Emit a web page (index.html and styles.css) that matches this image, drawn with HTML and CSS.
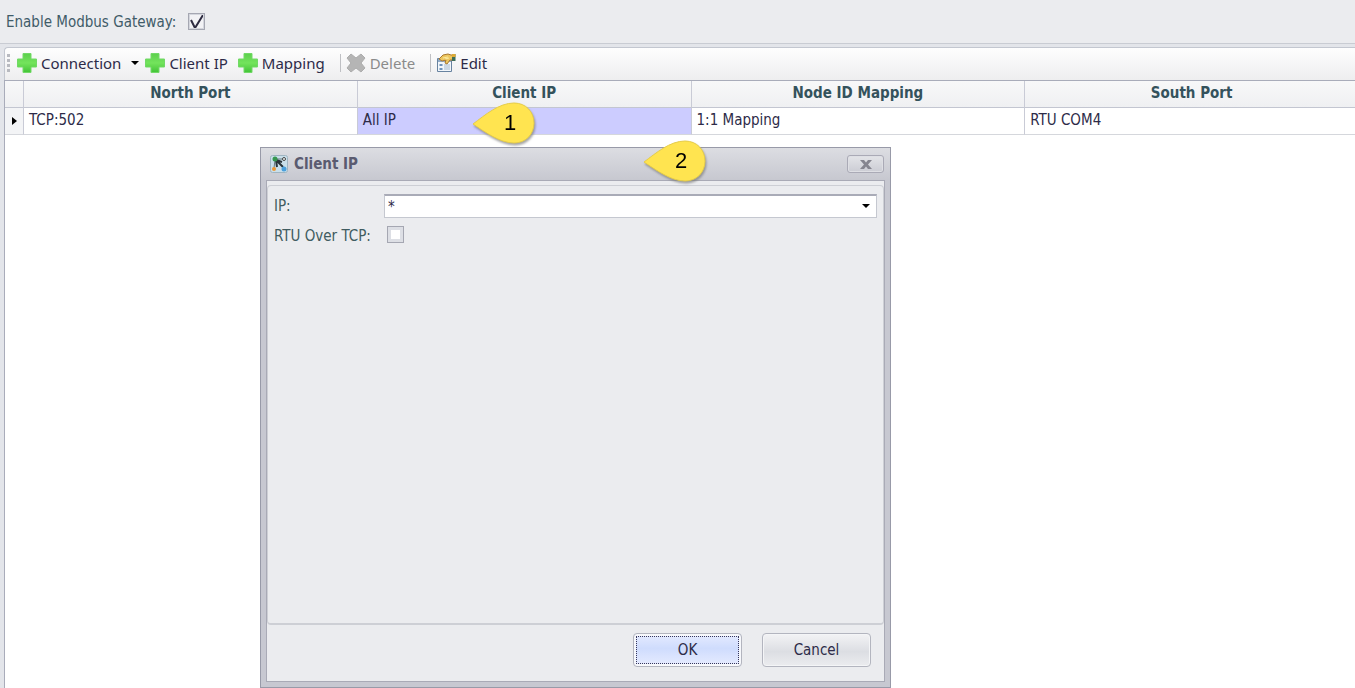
FILE: index.html
```html
<!DOCTYPE html>
<html lang="en">
<head>
<meta charset="utf-8">
<title>Modbus Gateway</title>
<link rel="stylesheet" href="styles.css">
</head>
<body>
<svg class="defs" aria-hidden="true">
  <defs>
    <linearGradient id="green" x1="0" y1="0" x2="0" y2="1"><stop offset="0" stop-color="#5ccf4d"/><stop offset=".5" stop-color="#74e45c"/><stop offset="1" stop-color="#41c336"/></linearGradient>
    <symbol id="plus" viewBox="0 0 20 20"><path d="M6 .5h8V6h5.500v8H14v5.500H6V14H.5V6H6z" fill="url(#green)" stroke="#72d967"/></symbol>
    <symbol id="callout" viewBox="0 0 64 42"><path d="M1 22C13 13 27 1 42 1C54 1 62 10 62 21S54 41 42 41C28 41 13 30 1 22Z" fill="#ffe450" stroke="#e5cc49"/></symbol>
  </defs>
</svg>
<main class="page">
  <header class="gateway">
    <label for="gateway">Enable Modbus Gateway:</label>
    <input class="check" id="gateway" type="checkbox" checked>
  </header>
  <section class="panel">
    <div class="toolbar" role="toolbar" aria-label="Gateway actions">
      <span class="grip"></span>
      <button class="tool tool-connection" type="button"><svg class="icon"><use href="#plus"/></svg>Connection<svg class="caret" viewBox="0 0 8 5"><path d="M0 0h8L4 4z"/></svg></button>
      <button class="tool tool-client" type="button"><svg class="icon"><use href="#plus"/></svg>Client IP</button>
      <button class="tool tool-mapping" type="button"><svg class="icon"><use href="#plus"/></svg>Mapping</button>
      <span class="separator"></span>
      <button class="tool tool-delete" type="button" disabled><svg class="icon" viewBox="0 0 20 20"><path d="M1 5L5 1l5 4L15 1l4 4-4 5L19 15l-4 4-5-4L5 19l-4-4 4-5z" fill="#b5b5b5" stroke="#adadad"/></svg>Delete</button>
      <span class="separator"></span>
      <button class="tool" type="button"><svg class="icon" viewBox="0 0 20 20"><path d="M1.500 5.500h14v13h-14z" fill="#f1f6fb" stroke="#6883a0"/><path d="M2 6h13v3H2z" fill="#91abc7"/><path d="M3.500 11h3v2h-3zM3.500 15h3v2h-3z" fill="#6f92ba"/><path d="M8 12h6M8 14h6M8 16h6" stroke="#a6b9cd"/><path d="M3 6l4-4 5-1 3 1h2v5h-3l-3 4-2-1 1-3-4 1z" fill="#edc65f" stroke="#a9792f"/><path d="M7 5l5-1M9 6l4-1" stroke="#faeb9f"/><path d="M16 1h3.500v7H16z" fill="#3d6d59"/><path d="M16 1h3.500v3H16z" fill="#dfaa34"/></svg>Edit</button>
    </div>
    <table class="grid">
      <colgroup><col class="col-marker"><col><col><col><col></colgroup>
      <thead><tr><th></th><th>North Port</th><th>Client IP</th><th>Node ID Mapping</th><th>South Port</th></tr></thead>
      <tbody><tr><td class="marker"><svg viewBox="0 0 5 8"><path d="M0 0l5 4-5 4z"/></svg></td><td>TCP:502</td><td class="selected">All IP</td><td>1:1 Mapping</td><td>RTU COM4</td></tr></tbody>
    </table>
  </section>
</main>
<div class="callout callout-one"><svg><use href="#callout"/></svg><span>1</span></div>
<section class="dialog" role="dialog" aria-labelledby="dialog-title">
  <header class="titlebar">
    <svg class="app-icon" viewBox="0 0 18 18"><rect x=".5" y=".5" width="17" height="17" rx="2" fill="#c9dfea" stroke="#9fb4c1"/><path d="M5 4h9M4 13L5 5" fill="none" stroke="#687b80"/><path d="M7 6l6 6M7 12l-1-7 6 2" fill="none" stroke="#29343a" stroke-width="2"/><circle cx="5" cy="4" r="2.500" fill="#36974f"/><circle cx="14" cy="4" r="1.500" fill="#f6f9f9" stroke="#444"/><circle cx="4" cy="14" r="2" fill="#ec9835"/><circle cx="14" cy="14" r="2.500" fill="#4a9fdc"/></svg>
    <h1 id="dialog-title">Client IP</h1>
    <button class="close" type="button" aria-label="Close"><svg viewBox="0 0 12 9"><path d="M0 0h4l2 2.500L8 0h4L8 4.500 12 9H8L6 6.500 4 9H0l4-4.500z" fill="#85858f"/></svg></button>
  </header>
  <form class="content">
    <div class="fields">
      <label for="ip">IP:</label>
      <div class="combo"><input id="ip" type="text" value="*"><button type="button" aria-label="Show addresses"><svg class="caret" viewBox="0 0 8 5"><path d="M0 0h8L4 4z"/></svg></button></div>
      <label for="rtu">RTU Over TCP:</label>
      <input class="check" id="rtu" type="checkbox">
    </div>
    <footer class="actions"><button class="primary" type="button"><span>OK</span></button><button type="button"><span>Cancel</span></button></footer>
  </form>
</section>
<div class="callout callout-two"><svg><use href="#callout"/></svg><span>2</span></div>
</body>
</html>
```
FILE: styles.css
```css
* { box-sizing: border-box; }
body { margin: 0; background: #fff; color: #2d2b48; font: 15px/20px "DejaVu Sans Condensed", "Noto Sans", sans-serif; }
button, input { font: inherit; color: inherit; margin: 0; }
svg { display: block; }
.defs { position: absolute; width: 0; height: 0; }
.page { min-height: 100vh; display: flex; flex-direction: column; background: #ebecef; }
.gateway { height: 43px; display: flex; align-items: center; gap: 12px; padding: 0 6px; color: #405b68; }
.check { appearance: none; width: 17px; height: 17px; border: 1px solid #a5a7b2; background: #fff; box-shadow: inset 0 0 0 3px #dddfe5; }
.check:checked { background: url("data:image/svg+xml,%3Csvg xmlns='http://www.w3.org/2000/svg' viewBox='0 0 15 15'%3E%3Cpath d='M2 6l4 8 8-13' fill='none' stroke='%232d2b40' stroke-width='2'/%3E%3C/svg%3E") #f2f2f5; box-shadow: inset 0 0 0 1px #d4d6dd; }
.panel { flex: 1; display: flex; flex-direction: column; overflow: hidden; border-top: 1px solid #c9ccd3; padding: 3px 0 0 4px; background: #e3e5ea; }
.panel::after { content: ""; flex: 1; background: #fff; border-left: 1px solid #a9acba; }
.toolbar { height: 33px; display: flex; align-items: center; background: linear-gradient(#fefefe, #eeeeef); border-top: 1px solid #c3c7d0; border-left: 1px solid #c3c7d0; border-radius: 4px 0 0; padding: 0 0 2px 2px; font: 15px/20px "Noto Sans", sans-serif; }
.grip { width: 3px; height: 18px; margin-right: 7px; background: repeating-linear-gradient(#b8bac0 0 3px, transparent 3px 5px); }
.tool { display: flex; align-items: center; gap: 4px; padding: 0; border: 0; background: none; white-space: nowrap; }
.tool:disabled { color: #8b8b8b; }
.tool-connection { margin-right: 6px; }
.tool-client { margin-right: 10px; }
.tool-mapping, .tool-delete { margin-right: 15px; }
.icon { width: 20px; height: 20px; }
.caret { width: 8px; height: 5px; }
.tool .caret { margin-left: 6px; }
.separator { width: 1px; height: 18px; margin-right: 5px; background: #bfc0c4; }
/* The last column runs under the right edge of the window. */
.grid { width: calc(100% + 4px); table-layout: fixed; border-collapse: separate; border-spacing: 0; background: #fff; border-top: 1px solid #a9acba; border-left: 1px solid #a9acba; }
.col-marker { width: 19px; }
.grid th, .grid td { height: 27px; padding: 0 5px; border-right: 1px solid #c9cbd6; border-bottom: 1px solid #d5d7dc; }
.grid th { padding-bottom: 2px; background: linear-gradient(#f8f8f9, #eff0f2); border-bottom-color: #c3c6d1; color: #34525c; font-weight: bold; text-align: center; }
.grid td { padding-bottom: 2px; text-align: left; }
.grid .marker { background: #f3f4f6; padding: 0 7px; }
.marker svg { width: 5px; height: 8px; }
.grid .selected { background: #ccccff; }
.dialog { position: absolute; left: 260px; top: 147px; width: 631px; height: 541px; display: flex; flex-direction: column; padding: 0 5px 5px; border: 1px solid #989aa8; background: #c7c8d1; }
.titlebar { height: 32px; margin: 0 -5px; padding: 0 6px 0 9px; display: flex; align-items: center; gap: 6px; background: linear-gradient(#dcdde2, #c7c8d0); color: #5a5b70; }
.titlebar h1 { flex: 1; margin: 0; font: inherit; font-weight: bold; }
.app-icon { width: 18px; height: 18px; }
.close { width: 37px; height: 18px; display: grid; place-items: center; padding: 0; border: 1px solid #aaaab6; border-radius: 3px; background: linear-gradient(#e3e4e8, #cbccd4); box-shadow: inset 0 0 0 1px #dedfe4; }
.close svg { width: 12px; height: 9px; }
.content { flex: 1; display: flex; flex-direction: column; padding-top: 4px; background: #ebecef; border: 1px solid #a9aab6; }
.fields { flex: 1; display: grid; grid-template-columns: 110px 1fr; grid-template-rows: 24px 20px; gap: 8px 0; align-items: center; padding: 8px 6px; border: 1px solid #cdcfd5; border-width: 1px 1px 2px; border-radius: 4px; color: #405b60; }
.fields label { white-space: nowrap; }
.fields .check { margin-left: 3px; align-self: start; }
.combo { display: flex; height: 24px; border: 1px solid #c5c8d0; border-top: 2px solid #a9abb7; background: #fff; color: #2d2b48; }
.combo input { flex: 1; min-width: 0; border: 0; padding: 0 3px; background: none; outline: 0; }
.combo button { width: 20px; padding: 0 6px; border: 0; background: none; }
.actions { height: 56px; display: flex; justify-content: flex-end; gap: 20px; padding: 8px 13px; }
.actions button { width: 109px; height: 34px; padding: 3px; border: 1px solid #b3b5bf; border-radius: 4px; background: linear-gradient(#f3f3f5, #dcdee3 55%, #ebecef); box-shadow: inset 0 0 0 1px #f4f5f7; }
.actions span { display: block; height: 26px; line-height: 26px; }
.actions .primary { background: linear-gradient(#e5ebff, #cfdcfd 45%, #e7ecff); box-shadow: inset 0 0 0 2px #f7f8fc; }
.primary span { outline: 1px dotted #37375b; }
.callout { position: absolute; width: 64px; height: 42px; display: grid; place-items: center; font: 22px/24px "Liberation Sans", Arial, sans-serif; color: #000; filter: drop-shadow(1px 2px 1px #777a); }
.callout svg { width: 64px; height: 42px; grid-area: 1 / 1; }
.callout span { grid-area: 1 / 1; padding-left: 12px; }
.callout-one { left: 472px; top: 102px; }
.callout-two { left: 643px; top: 140px; }
```
